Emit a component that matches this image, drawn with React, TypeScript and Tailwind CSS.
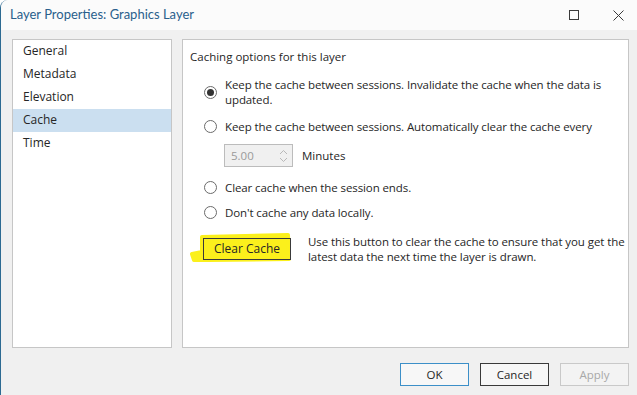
import React from 'react';

const font = { fontFamily: '"Open Sans", "Noto Sans", sans-serif' };

const Radio = ({ checked }: { checked?: boolean }) => (
    <span className="w-[13px] h-[13px] shrink-0 rounded-full border border-[#6b6b6b] bg-white flex items-center justify-center">
        {checked && <span className="w-[7px] h-[7px] rounded-full bg-[#333333]" />}
    </span>
);

const Option = ({ checked, children, className = '' }: { checked?: boolean, children: React.ReactNode, className?: string }) => (
    <div className={`flex items-center gap-[8px] pl-[21px] ${className}`}>
        <Radio checked={checked} />
        <span className="leading-[15px] whitespace-nowrap tracking-[-0.1px]">{children}</span>
    </div>
);

const navItems = ['General', 'Metadata', 'Elevation', 'Cache', 'Time'];

export default function App() {
    return (
        <div className="w-[637px] h-[395px] bg-[#f0f0f0] flex flex-col border-l border-[#2d6a92] rounded-tl-[8px] overflow-hidden text-[11.5px] text-[#262626]" style={font}>
            {/* title bar */}
            <div className="h-[30px] shrink-0 bg-[#fbfbfb] flex items-center pl-[9px]">
                <span className="text-[13px] text-[#2a5f8c] font-['Lato',sans-serif]">Layer Properties: Graphics Layer</span>
                <div className="ml-auto flex items-center">
                    <div className="w-[10px] h-[10px] border border-[#3a3a3a] mr-[34px]" />
                    <svg width="11" height="11" viewBox="0 0 11 11" className="mr-[13px]">
                        <path d="M0.5 0.5 L10.5 10.5 M10.5 0.5 L0.5 10.5" stroke="#3a3a3a" strokeWidth="1" />
                    </svg>
                </div>
            </div>

            {/* body */}
            <div className="flex gap-[10px] pl-[11px] pr-[8px] pt-[9px] h-[318px]">
                <div className="w-[160px] h-[309px] bg-white border border-[#c6c6c6] flex flex-col text-[12px]">
                    {navItems.map((item) => (
                        <div
                            key={item}
                            className={`h-[23px] flex items-center pl-[10px] pb-[2px] ${item === 'Cache' ? 'bg-[#cbdff0]' : ''}`}
                        >
                            {item}
                        </div>
                    ))}
                </div>

                <div className="flex-1 h-[309px] bg-white border border-[#c6c6c6] flex flex-col">
                    <div className="pl-[7px] pt-[9px] leading-[16px]">Caching options for this layer</div>

                    <Option checked className="mt-[12px]">
                        Keep the cache between sessions. Invalidate the cache when the data is
                        <br />
                        updated.
                    </Option>

                    <Option className="mt-[12px]">
                        Keep the cache between sessions. Automatically clear the cache every
                    </Option>

                    <div className="flex items-center mt-[10px] pl-[41px]">
                        <div className="w-[69px] h-[23px] border border-[#bcbcbc] bg-[#f0f0f0] flex items-center pl-[6px] pr-[4px]">
                            <span className="text-[#9a9a9a]">5.00</span>
                            <svg width="9" height="16" viewBox="0 0 9 16" className="ml-auto">
                                <path d="M1 6 L4.5 2.5 L8 6 M1 10 L4.5 13.5 L8 10" fill="none" stroke="#b8b8b8" strokeWidth="1" />
                            </svg>
                        </div>
                        <span className="ml-[9px]">Minutes</span>
                    </div>

                    <Option className="mt-[13px]">Clear cache when the session ends.</Option>
                    <Option className="mt-[10px]">Don't cache any data locally.</Option>

                    <div className="flex items-center mt-[14px] pl-[20px]">
                        <div className="relative">
                            <svg width="110" height="34" viewBox="0 0 110 34" className="absolute left-[-15px] top-[-5px]">
                                <path
                                    d="M14 4 L100 2 L101 26 L20 27 L6 27 L4 21 L14 19 Z"
                                    fill="#fbf01c"
                                    stroke="#fbf01c"
                                    strokeWidth="4"
                                    strokeLinejoin="round"
                                />
                            </svg>
                            <div className="relative w-[88px] h-[22px] border border-[#3a3a3a] flex items-center justify-center text-[12px]">
                                Clear Cache
                            </div>
                        </div>
                        <div className="ml-[17px] leading-[15px] whitespace-nowrap tracking-[-0.08px]">
                            Use this button to clear the cache to ensure that you get the
                            <br />
                            latest data the next time the layer is drawn.
                        </div>
                    </div>
                </div>
            </div>

            {/* footer */}
            <div className="flex justify-end gap-[11px] pr-[8px] pt-[15px]">
                <button className="w-[69px] h-[23px] border border-[#3c8fc8] bg-[#f7f7f7] text-[#262626]">OK</button>
                <button className="w-[69px] h-[23px] border border-[#3a3a3a] bg-[#f7f7f7] text-[#262626]">Cancel</button>
                <button className="w-[69px] h-[23px] border border-[#c9c9c9] bg-[#f3f3f3] text-[#a8a8a8]">Apply</button>
            </div>
        </div>
    );
}
